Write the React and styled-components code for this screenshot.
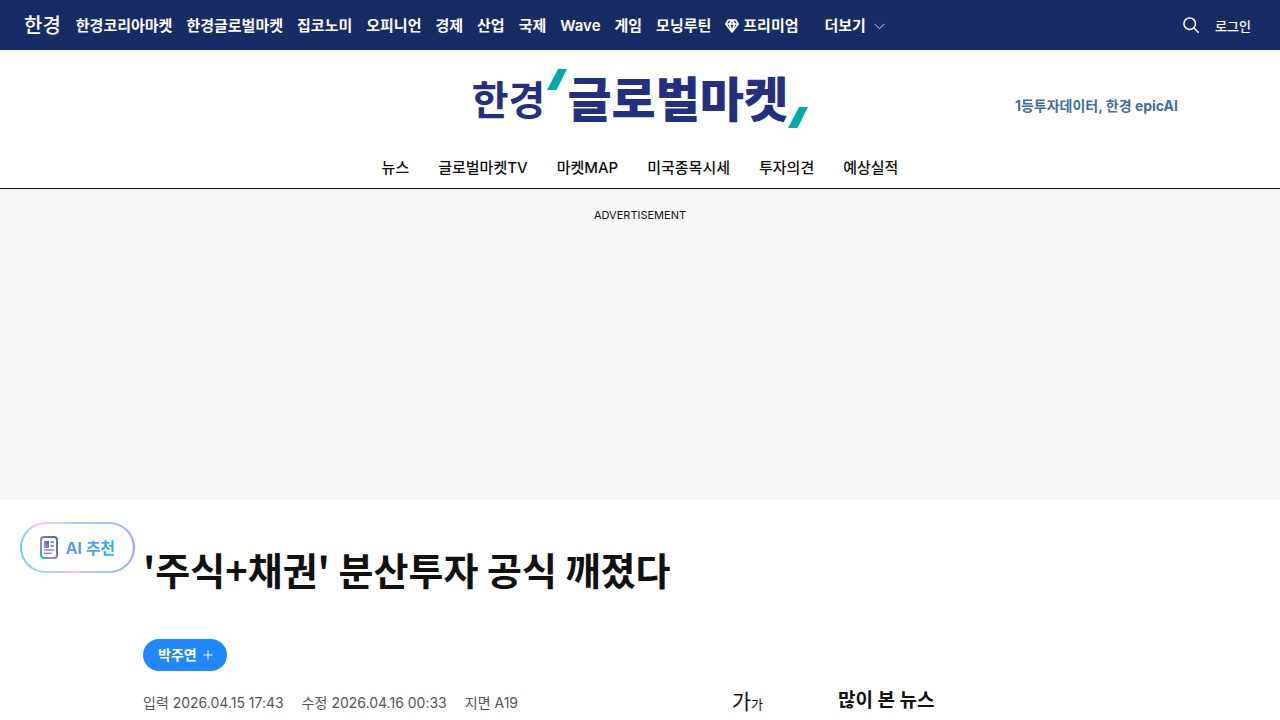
import React from 'react';
import styled, { createGlobalStyle } from 'styled-components';

const GlobalStyle = createGlobalStyle`
  * {
    box-sizing: border-box;
  }

  body {
    margin: 0;
    background-color: #fff;
    color: #111;
    font-family: Inter, 'Noto Sans CJK KR', sans-serif;
    overflow-x: hidden;
  }

  a {
    color: inherit;
    text-decoration: none;
  }

  button {
    font-family: inherit;
    color: inherit;
    background: none;
    border: none;
    padding: 0;
    cursor: pointer;
  }
`;

const TopBar = styled.header`
  display: flex;
  align-items: center;
  height: 50px;
  padding: 2px 29px 0 24px;
  background-color: #152c65;
  color: #fff;
`;

const TopLogo = styled.a`
  margin-right: 15px;
  font-size: 20px;
  line-height: 24px;
  font-weight: 500;
`;

const TopNav = styled.nav`
  display: flex;
  align-items: center;
  gap: 14px;
  font-size: 15px;
  line-height: 24px;
  font-weight: 600;
  white-space: nowrap;
`;

const IconLink = styled.a`
  display: flex;
  align-items: center;
  gap: 4px;
`;

const MoreButton = styled.button`
  display: flex;
  align-items: center;
  gap: 8px;
  margin-left: 12px;
  font-size: 15px;
  line-height: 24px;
  font-weight: 600;
`;

const TopTools = styled.div`
  display: flex;
  align-items: center;
  gap: 16px;
  margin-left: auto;
`;

const SearchButton = styled.button`
  display: flex;
`;

const LoginLink = styled.a`
  font-size: 13px;
  line-height: 24px;
  font-weight: 500;
`;

const BrandRow = styled.div`
  display: grid;
  grid-template-columns: 1fr auto 1fr;
  height: 96px;
  max-width: 1076px;
  margin: 0 auto;
`;

const Brand = styled.a`
  grid-column: 2;
  display: flex;
  align-items: center;
  color: #242f80;
  padding-top: 4px;
`;

const BrandSmall = styled.span`
  padding-top: 2px;
  font-size: 40px;
  line-height: 48px;
  font-weight: 600;
`;

const BrandLarge = styled.span`
  font-size: 48px;
  line-height: 48px;
  font-weight: 900;
`;

const Slash = styled.svg`
  align-self: ${props => (props.$low ? 'flex-end' : 'flex-start')};
  margin: ${props => (props.$low ? '0 0 18px' : '15px 0 0 2px')};
`;

const Promo = styled.a`
  justify-self: end;
  margin-top: 46px;
  color: #416f96;
  font-size: 14px;
  line-height: 20px;
  font-weight: 700;
`;

const MainNav = styled.nav`
  display: flex;
  justify-content: center;
  gap: 29px;
  height: 43px;
  padding-top: 10px;
  border-bottom: 1px solid #111;
  font-size: 15px;
  line-height: 24px;
  font-weight: 500;
`;

const AdArea = styled.aside`
  height: 311px;
  padding-top: 18px;
  background-color: #f7f7f7;
  text-align: center;
  font-size: 11px;
  line-height: 16px;
`;

const Page = styled.div`
  display: grid;
  grid-template-columns: 123px minmax(0, 1fr);
  padding: 22px 123px 0 20px;
`;

const AiButton = styled.button`
  display: flex;
  align-items: center;
  justify-content: center;
  gap: 8px;
  width: 115px;
  height: 51px;
  border: 2px solid transparent;
  border-radius: 26px;
  background:
    linear-gradient(#fff, #fff) padding-box,
    conic-gradient(from 90deg, #9ba0ff, #9fc2ff 40deg, #f6c0f6 95deg, #a6d2ff 145deg, #5fd3df 180deg, #f6c6f6 215deg, #9ed2ff 265deg, #aebfff 320deg, #9ba0ff) border-box;
`;

const AiLabel = styled.span`
  background: linear-gradient(90deg, #6290f5, #22b2ee);
  background-clip: text;
  color: transparent;
  font-size: 16px;
  line-height: 24px;
  font-weight: 700;
`;

const Article = styled.article`
  padding-top: 20px;
`;

const Title = styled.h1`
  margin: 0;
  font-family: 'Noto Sans CJK KR', sans-serif;
  font-size: 38px;
  line-height: 54px;
  font-weight: 700;
`;

const Reporter = styled.button`
  display: flex;
  align-items: center;
  gap: 6px;
  height: 32px;
  margin-top: 43px;
  padding: 0 14px 0 15px;
  border-radius: 16px;
  background-color: #2088ff;
  color: #fff;
  font-size: 14px;
  line-height: 20px;
  font-weight: 600;
`;

const Columns = styled.div`
  display: grid;
  grid-template-columns: 620px minmax(0, 1fr);
  column-gap: 75px;
  margin-top: 14px;
`;

const MetaRow = styled.div`
  display: flex;
  align-items: center;
  gap: 18px;
  height: 32px;
  padding-top: 3px;
  color: #555;
  font-size: 14px;
  line-height: 20px;
`;

const FontSizeButton = styled.button`
  display: flex;
  align-items: baseline;
  margin-left: auto;
  color: #111;
  font-size: 21px;
  line-height: 24px;
`;

const SmallLetter = styled.span`
  font-size: 13px;
`;

const SideTitle = styled.h2`
  margin: 0;
  font-size: 19px;
  line-height: 32px;
  font-weight: 700;
`;

const topLinks = ['한경코리아마켓', '한경글로벌마켓', '집코노미', '오피니언', '경제', '산업', '국제', 'Wave', '게임', '모닝루틴'];

const mainLinks = ['뉴스', '글로벌마켓TV', '마켓MAP', '미국종목시세', '투자의견', '예상실적'];

const DiamondIcon = () => (
  <svg width="14" height="14" viewBox="0 0 14 14" fill="none" stroke="#fff" strokeWidth="1.6" strokeLinejoin="round" aria-hidden="true">
    <path d="M3.4 1h7.2L13.2 5 7 13 .8 5zM.8 5h12.4M4.5 5 7 12.5 9.5 5M4.5 5 7 1l2.5 4" />
  </svg>
);

const ChevronIcon = () => (
  <svg width="11" height="7" viewBox="0 0 11 7" fill="none" stroke="#d0d5e0" aria-hidden="true">
    <path d="M.5.8 5.5 5.8 10.5.8" />
  </svg>
);

const SearchIcon = () => (
  <svg width="16" height="18" viewBox="0 0 16 18" fill="none" stroke="#fff" strokeWidth="1.5" strokeLinecap="round" aria-hidden="true">
    <circle cx="6.7" cy="6.7" r="5.8" />
    <path d="M11 11l4.2 4.2" />
  </svg>
);

const SlashMark = ({ low }) => (
  <Slash $low={low} width="20" height="21" viewBox="0 0 20 21" aria-hidden="true">
    <path d="M11 0h9L9.5 21H0z" fill="#00aba9" />
  </Slash>
);

const NewsIcon = () => (
  <svg width="18" height="23" viewBox="0 0 18 23" fill="none" aria-hidden="true">
    <defs>
      <linearGradient id="newsFrame" x1="0" y1="1" x2="1" y2="0">
        <stop offset="0" stopColor="#00bfc5" />
        <stop offset="0.35" stopColor="#b877d8" />
        <stop offset="0.6" stopColor="#6674cf" />
        <stop offset="1" stopColor="#5166c4" />
      </linearGradient>
    </defs>
    <rect x="1" y="1" width="16" height="21" rx="3" stroke="url(#newsFrame)" strokeWidth="2" />
    <rect x="4" y="5" width="5" height="7" fill="url(#newsFrame)" />
    <path d="M10.5 6H14M10.5 10H14" stroke="#596dcc" strokeWidth="1.6" />
    <path d="M4 14h10" stroke="#7780d4" strokeWidth="1.4" />
    <path d="M4 17.3h8" stroke="#b56fd0" strokeWidth="1.4" />
  </svg>
);

const PlusIcon = () => (
  <svg width="10" height="10" viewBox="0 0 10 10" stroke="#fff" aria-hidden="true">
    <path d="M5 .5v9M.5 5h9" />
  </svg>
);

const App = () => {
  return (
    <>
      <GlobalStyle />
      <TopBar>
        <TopLogo href="#">한경</TopLogo>
        <TopNav>
          {topLinks.map(label => (
            <a key={label} href="#">{label}</a>
          ))}
          <IconLink href="#"><DiamondIcon />프리미엄</IconLink>
          <MoreButton type="button">더보기<ChevronIcon /></MoreButton>
        </TopNav>
        <TopTools>
          <SearchButton type="button" aria-label="검색"><SearchIcon /></SearchButton>
          <LoginLink href="#">로그인</LoginLink>
        </TopTools>
      </TopBar>

      <BrandRow>
        <Brand href="#">
          <BrandSmall>한경</BrandSmall>
          <SlashMark />
          <BrandLarge>글로벌마켓</BrandLarge>
          <SlashMark low />
        </Brand>
        <Promo href="#">1등투자데이터, 한경 epicAI</Promo>
      </BrandRow>

      <MainNav>
        {mainLinks.map(label => (
          <a key={label} href="#">{label}</a>
        ))}
      </MainNav>

      <AdArea>ADVERTISEMENT</AdArea>

      <Page>
        <AiButton type="button">
          <NewsIcon />
          <AiLabel>AI 추천</AiLabel>
        </AiButton>
        <Article>
          <Title>'주식+채권' 분산투자 공식 깨졌다</Title>
          <Reporter type="button">박주연<PlusIcon /></Reporter>
          <Columns>
            <MetaRow>
              <span>입력 2026.04.15 17:43</span>
              <span>수정 2026.04.16 00:33</span>
              <span>지면 A19</span>
              <FontSizeButton type="button">가<SmallLetter>가</SmallLetter></FontSizeButton>
            </MetaRow>
            <SideTitle>많이 본 뉴스</SideTitle>
          </Columns>
        </Article>
      </Page>
    </>
  );
};

export default App;
